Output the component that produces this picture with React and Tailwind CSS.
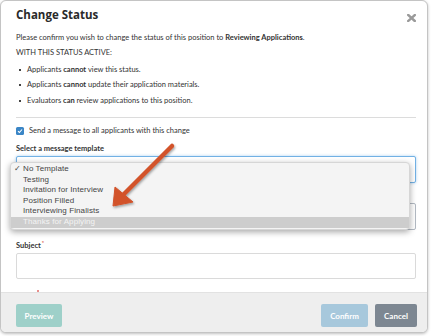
import React from 'react';

const bullets = [
  ['Applicants ', 'cannot', ' view this status.'],
  ['Applicants ', 'cannot', ' update their application materials.'],
  ['Evaluators ', 'can', ' review applications to this position.'],
];

const templates = [
  'No Template',
  'Testing',
  'Invitation for Interview',
  'Position Filled',
  'Interviewing Finalists',
  'Thanks for Applying',
];

function TemplateMenu() {
  return (
    <div className="absolute left-[10px] top-[162px] w-[400px] rounded-[4px] border border-[#d6d6d6] bg-[#f4f4f4] pt-[1px] pb-[1.5px] shadow-[0_2px_6px_rgba(0,0,0,0.35)] font-['Liberation_Sans',sans-serif] text-[8px] tracking-[0.1px] text-[#444]">
      {templates.map((t, i) => (
        <div
          key={t}
          className={`relative h-[10.6px] pl-[12px] leading-[10.6px] ${
            i === templates.length - 1 ? 'bg-[#cdcdcd] text-[#f4f4f4]' : ''
          }`}
        >
          {i === 0 && <span className="absolute left-[3px] top-0">✓</span>}
          {t}
        </div>
      ))}
    </div>
  );
}

function Arrow() {
  return (
    <svg className="absolute left-0 top-0" width="432" height="336" viewBox="0 0 432 336">
      <defs>
        <filter id="sh" x="-20%" y="-20%" width="140%" height="140%">
          <feDropShadow dx="1" dy="1.5" stdDeviation="1.2" floodColor="#000" floodOpacity="0.35" />
        </filter>
      </defs>
      <g filter="url(#sh)" fill="#d2532b" stroke="#d2532b">
        <line x1="172" y1="146" x2="124" y2="194" strokeWidth="4.5" strokeLinecap="round" />
        <polygon points="113,206 115,187 133,202" strokeWidth="1" strokeLinejoin="round" />
      </g>
    </svg>
  );
}

export default function App() {
  return (
    <div className="relative h-[336px] w-[432px] overflow-hidden bg-white font-['Lato',sans-serif] text-[#333]">
      <div className="flex h-[333px] w-[428px] flex-col overflow-hidden rounded-[6px] border border-[#c4c4c4] bg-white shadow-[0_1px_3px_rgba(0,0,0,0.25)]">
        <div className="relative h-[291px] overflow-hidden pl-[15px] pr-[11px]">
          <div className="flex items-start justify-between pt-[4px]">
            <h2 className="font-['Open_Sans',sans-serif] text-[11.5px] font-bold leading-[20px] text-[#2a2a2a]">
              Change Status
            </h2>
            <svg className="mt-[9px]" width="9" height="8" viewBox="0 0 9 8">
              <path d="M1.2 1 L7.8 7 M7.8 1 L1.2 7" stroke="#9a9a9a" strokeWidth="2.4" strokeLinecap="square" />
            </svg>
          </div>

          <p className="mt-[7px] text-[7.5px] leading-[12px]">
            Please confirm you wish to change the status of this position to{' '}
            <span className="font-bold">Reviewing Applications</span>.
          </p>
          <p className="mt-[3px] text-[7.5px] leading-[12px]">WITH THIS STATUS ACTIVE:</p>
          <ul className="mt-[3px]">
            {bullets.map(([a, b, c]) => (
              <li key={c} className="flex h-[15.5px] items-center text-[7.5px] leading-[12px]">
                <span className="ml-[3px] mr-[6px] h-[2px] w-[2px] bg-[#444]" />
                {a}
                <span className="whitespace-pre font-bold"> {b} </span>
                {c.trim()}
              </li>
            ))}
          </ul>

          <div className="mt-[8.5px] border-t border-[#dcdcdc]" />

          <label className="mt-[7px] flex h-[12px] items-center text-[7.5px]">
            <span className="mr-[5px] flex h-[8px] w-[8px] items-center justify-center rounded-[1.5px] bg-[#3b86c6]">
              <svg width="6" height="6" viewBox="0 0 6 6">
                <path d="M1 3.1 L2.4 4.5 L5 1.5" fill="none" stroke="#fff" strokeWidth="1.1" />
              </svg>
            </span>
            Send a message to all applicants with this change
          </label>

          <div className="mt-[6px] h-[12px] text-[7.5px] font-bold leading-[12px]">Select a message template</div>
          <div className="mt-[1px] h-[27px] rounded-[2px] border-[1.5px] border-[#72b1e4] bg-white shadow-[0_0_3px_rgba(80,160,230,0.5)]" />

          <div className="mt-[20px] flex gap-[15px]">
            <div className="h-[27px] flex-1 rounded-[2px] border border-[#b3bac3] bg-white" />
            <div className="h-[27px] flex-1 rounded-[2px] border border-[#b3bac3] bg-white" />
          </div>

          <div className="mt-[10px] h-[12px] text-[7.5px] font-bold leading-[12px]">
            Subject<sup className="ml-[1px] text-[#d9534f]">*</sup>
          </div>
          <div className="mt-[1px] h-[26px] rounded-[2px] border border-[#dadada] bg-white" />

          {/* top of the next field's required marker peeks out above the footer */}
          <div className="ml-[21px] mt-[11px] h-[2px] w-[2px] rounded-full bg-[#e06a66]" />
        </div>

        <div className="flex h-[40px] items-start justify-between border-t border-[#e2e2e2] bg-[#eeeeee] pl-[15px] pr-[10px] pt-[11px] text-[8px]">
          <button className="h-[23px] w-[46px] rounded-[2px] bg-[#9ed0c9] font-bold text-white">Preview</button>
          <div className="flex gap-[7px]">
            <button className="h-[23px] w-[47px] rounded-[2px] bg-[#a7c8dc] font-bold text-white">Confirm</button>
            <button className="h-[23px] w-[42px] rounded-[2px] bg-[#7d8792] font-bold text-white">Cancel</button>
          </div>
        </div>
      </div>

      <TemplateMenu />
      <Arrow />
    </div>
  );
}
